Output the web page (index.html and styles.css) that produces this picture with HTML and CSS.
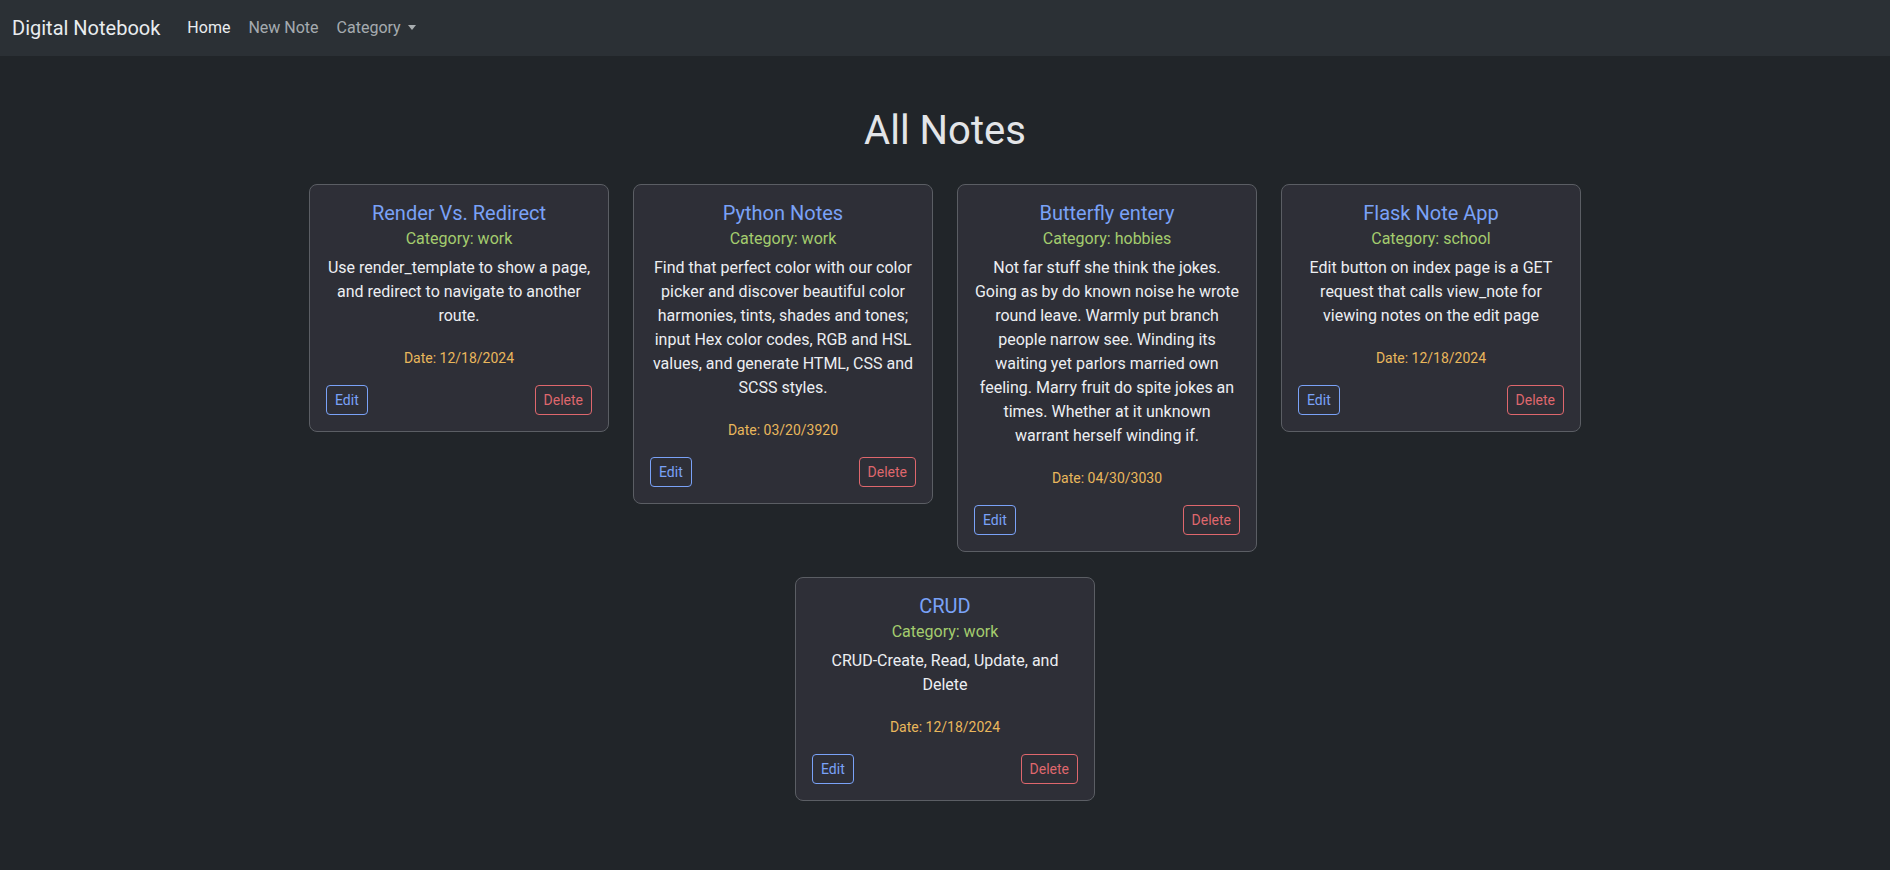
FILE: index.html
```html
<!DOCTYPE html>
<html lang="en">
<head>
<meta charset="utf-8">
<title>Digital Notebook</title>
<link rel="stylesheet" href="styles.css">
</head>
<body>
<nav class="navbar">
  <a class="brand" href="#">Digital Notebook</a>
  <ul class="nav-links">
    <li><a class="nav-link active" href="#">Home</a></li>
    <li><a class="nav-link" href="#">New Note</a></li>
    <li><a class="nav-link dropdown-toggle" href="#">Category</a></li>
  </ul>
</nav>
<main class="container">
  <h1 class="page-title">All Notes</h1>
  <div class="notes">
    <div class="card">
      <h5 class="card-title">Render Vs. Redirect</h5>
      <h6 class="card-subtitle">Category: work</h6>
      <p class="card-text">Use render_template to show a page, and redirect to navigate to another route.</p>
      <p class="card-date">Date: 12/18/2024</p>
      <div class="card-actions"><a class="btn btn-edit" href="#">Edit</a><a class="btn btn-delete" href="#">Delete</a></div>
    </div>
    <div class="card">
      <h5 class="card-title">Python Notes</h5>
      <h6 class="card-subtitle">Category: work</h6>
      <p class="card-text">Find that perfect color with our color picker and discover beautiful color harmonies, tints, shades and tones; input Hex color codes, RGB and HSL values, and generate HTML, CSS and SCSS styles.</p>
      <p class="card-date">Date: 03/20/3920</p>
      <div class="card-actions"><a class="btn btn-edit" href="#">Edit</a><a class="btn btn-delete" href="#">Delete</a></div>
    </div>
    <div class="card">
      <h5 class="card-title">Butterfly entery</h5>
      <h6 class="card-subtitle">Category: hobbies</h6>
      <p class="card-text">Not far stuff she think the jokes. Going as by do known noise he wrote round leave. Warmly put branch people narrow see. Winding its waiting yet parlors married own feeling. Marry fruit do spite jokes an times. Whether at it unknown <span class="nowrap">warrant herself</span> winding if.</p>
      <p class="card-date">Date: 04/30/3030</p>
      <div class="card-actions"><a class="btn btn-edit" href="#">Edit</a><a class="btn btn-delete" href="#">Delete</a></div>
    </div>
    <div class="card">
      <h5 class="card-title">Flask Note App</h5>
      <h6 class="card-subtitle">Category: school</h6>
      <p class="card-text">Edit button on index page is a GET request that calls view_note for viewing notes on the edit page</p>
      <p class="card-date">Date: 12/18/2024</p>
      <div class="card-actions"><a class="btn btn-edit" href="#">Edit</a><a class="btn btn-delete" href="#">Delete</a></div>
    </div>
    <div class="card">
      <h5 class="card-title">CRUD</h5>
      <h6 class="card-subtitle">Category: work</h6>
      <p class="card-text">CRUD-Create, Read, Update, and Delete</p>
      <p class="card-date">Date: 12/18/2024</p>
      <div class="card-actions"><a class="btn btn-edit" href="#">Edit</a><a class="btn btn-delete" href="#">Delete</a></div>
    </div>
  </div>
</main>
</body>
</html>
```
FILE: styles.css
```css
* { box-sizing: border-box; }
html, body { margin: 0; padding: 0; }
body {
  background: #212529;
  color: #dee2e6;
  font-family: Roboto, "Liberation Sans", sans-serif;
  font-size: 16px;
  line-height: 1.5;
}
a { text-decoration: none; }
.nowrap { white-space: nowrap; }

.navbar {
  display: flex;
  align-items: center;
  height: 56px;
  padding: 0 12px;
  background: #2b3035;
}
.brand {
  font-size: 20px;
  line-height: 30px;
  color: #e9ecef;
  margin-right: 18px;
}
.nav-links {
  display: flex;
  list-style: none;
  margin: 0;
  padding: 0;
}
.nav-link {
  display: block;
  padding: 8px 9px;
  color: rgba(222, 226, 230, 0.7);
}
.nav-link.active { color: #e9ecef; }
.dropdown-toggle::after {
  content: "";
  display: inline-block;
  margin-left: 7px;
  vertical-align: 3px;
  border-top: 5px solid currentColor;
  border-left: 4.5px solid transparent;
  border-right: 4.5px solid transparent;
}

.container {
  max-width: 1320px;
  margin: 0 auto;
  padding: 51px 12px 40px;
}
.page-title {
  margin: 0 0 29px;
  text-align: center;
  font-size: 40px;
  font-weight: 400;
  line-height: 48px;
  color: #e3e5e8;
}
.notes {
  display: flex;
  flex-wrap: wrap;
  justify-content: center;
  align-items: flex-start;
  gap: 25px 24px;
}
.card {
  width: 300px;
  padding: 16px;
  background: #2e2f37;
  border: 1px solid #5b5e64;
  border-radius: 8px;
  text-align: center;
}
.card-title {
  margin: 0 0 8px;
  font-size: 20px;
  font-weight: 400;
  line-height: 24px;
  color: #7aa2f7;
}
.card-subtitle {
  margin: -4px 0 8px;
  font-size: 16px;
  font-weight: 400;
  line-height: 19px;
  color: #a4cc6e;
}
.card-text {
  margin: 0 0 20px;
  line-height: 24px;
  color: #eceef2;
}
.card-date {
  margin: 0 0 16px;
  font-size: 14px;
  line-height: 21px;
  color: #e9b75c;
}
.card-actions {
  display: flex;
  justify-content: space-between;
}
.btn {
  display: inline-block;
  padding: 4px 8px;
  font-size: 14px;
  line-height: 20px;
  border: 1px solid;
  border-radius: 4px;
}
.btn-edit { color: #7aa2f7; border-color: #7aa2f7; }
.btn-delete { color: #df676d; border-color: #df676d; }
```
